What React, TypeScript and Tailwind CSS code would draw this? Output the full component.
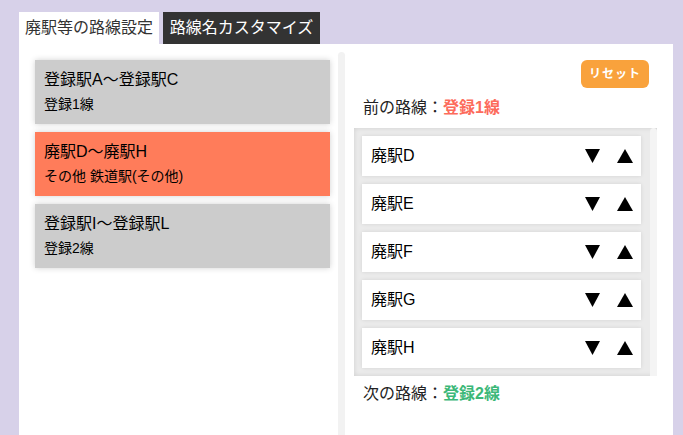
const ROUTES = [
    { title: '登録駅A〜登録駅C', sub: '登録1線', active: false },
    { title: '廃駅D〜廃駅H', sub: 'その他 鉄道駅(その他)', active: true },
    { title: '登録駅I〜登録駅L', sub: '登録2線', active: false },
];

const STATIONS = ['廃駅D', '廃駅E', '廃駅F', '廃駅G', '廃駅H'];

function Down() {
    return (
        <svg width="15" height="14" viewBox="0 0 15 14" className="block">
            <polygon points="0,0 15,0 7.5,14" fill="#000" />
        </svg>
    );
}

function Up() {
    return (
        <svg width="16" height="14" viewBox="0 0 16 14" className="block">
            <polygon points="8,0 16,14 0,14" fill="#000" />
        </svg>
    );
}

export default function App() {
    return (
        <div
            className="h-[435px] overflow-hidden bg-[#d7d1e9] pt-[12px] pl-[19px] pr-[10px] flex flex-col"
            style={{ fontFamily: '"Liberation Sans", "Noto Sans CJK JP", sans-serif' }}
        >
            {/* Tabs */}
            <div className="flex gap-[4px] h-[32px]">
                <div className="w-[140px] bg-white text-[#333] text-[16px] leading-[32px] text-center">廃駅等の路線設定</div>
                <div className="w-[157px] bg-[#333333] text-white text-[16px] leading-[32px] text-center">路線名カスタマイズ</div>
            </div>

            <div className="flex-1 bg-white flex">
                {/* Route list */}
                <div className="w-[319px] pl-[16px] pr-[8px] pt-[16px] flex flex-col gap-[8px]">
                    {ROUTES.map((r) => (
                        <div
                            key={r.title}
                            className={
                                r.active
                                    ? 'h-[64px] bg-[#ff7c5a] px-[9px] pt-[8px] shadow-[0_0_6px_rgba(0,0,0,0.18)]'
                                    : 'h-[64px] bg-[#cccccc] px-[9px] pt-[8px] shadow-[0_0_6px_rgba(0,0,0,0.18)]'
                            }
                        >
                            <div className="text-[16px] leading-[24px] text-black">{r.title}</div>
                            <div className="text-[14px] leading-[20px] mt-[2px] text-black">{r.sub}</div>
                        </div>
                    ))}
                </div>

                <div className="w-[7px] mt-[8px] bg-[#f2f2f2] rounded-t-full" />

                {/* Station order */}
                <div className="flex-1 pl-[9px] pr-[16px] pt-[16px] flex flex-col">
                    <div className="flex justify-end pr-[8px]">
                        <button className="w-[68px] h-[28px] rounded-[6px] bg-[#f9a23c] text-white text-[12px] font-bold tracking-[1px]">
                            リセット
                        </button>
                    </div>

                    <div className="mt-[8px] pl-[9px] text-[16px] leading-[24px] text-[#222]">
                        前の路線：<span className="font-bold text-[#fd6b5b]">登録1線</span>
                    </div>

                    <div className="mt-[8px] h-[248px] bg-[#ebebeb] shadow-[inset_0_0_5px_rgba(0,0,0,0.12)] flex pl-[8px] pt-[8px]">
                        <div className="w-[279px] flex flex-col gap-[8px]">
                            {STATIONS.map((s) => (
                                <div
                                    key={s}
                                    className="h-[40px] bg-white shadow-[0_0_4px_rgba(0,0,0,0.1)] flex items-center pl-[9px] pr-[8px]"
                                >
                                    <span className="flex-1 text-[16px] text-black">{s}</span>
                                    <div className="flex items-center gap-[17px]">
                                        <Down />
                                        <Up />
                                    </div>
                                </div>
                            ))}
                        </div>
                        <div className="ml-[9px] w-[7px] -mt-[8px] bg-[#f4f4f4] rounded-t-full" />
                    </div>

                    <div className="mt-[6px] pl-[9px] text-[16px] leading-[24px] text-[#222]">
                        次の路線：<span className="font-bold text-[#3cb878]">登録2線</span>
                    </div>
                </div>
            </div>
        </div>
    );
}
